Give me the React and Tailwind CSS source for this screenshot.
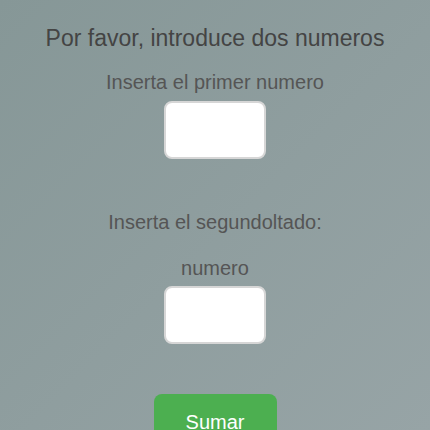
import React from "react";

const App = () => {
  return (
    <div
      className="w-[430px] h-[430px] overflow-hidden bg-gradient-to-br from-[#869797] to-[#97a4a6] text-center"
      style={{ fontFamily: '"Liberation Sans", Arial, sans-serif' }}
    >
      <h1 className="pt-[26px] text-[23px] leading-[25px] text-[#444444]">
        Por favor, introduce dos numeros
      </h1>
      <p className="mt-[21px] text-[20px] leading-[21px] text-[#555555]">
        Inserta el primer numero
      </p>
      <div className="mt-[8px] flex justify-center">
        <input
          type="text"
          className="w-[102px] h-[58px] bg-white rounded-[8px] border-2 border-[#d6d6d6] outline-none"
        />
      </div>
      <p className="mt-[53px] text-[20px] leading-[21px] text-[#555555]">
        Inserta el segundoltado:
      </p>
      <p className="mt-[25px] text-[20px] leading-[21px] text-[#555555]">numero</p>
      <div className="mt-[7px] flex justify-center">
        <input
          type="text"
          className="w-[102px] h-[58px] bg-white rounded-[8px] border-2 border-[#d6d6d6] outline-none"
        />
      </div>
      <div className="mt-[50px] flex justify-center">
        <button className="w-[123px] h-[50px] bg-[#4caf50] rounded-[8px] text-white text-[20px] pt-[6px]">
          Sumar
        </button>
      </div>
    </div>
  );
};

export default App;
